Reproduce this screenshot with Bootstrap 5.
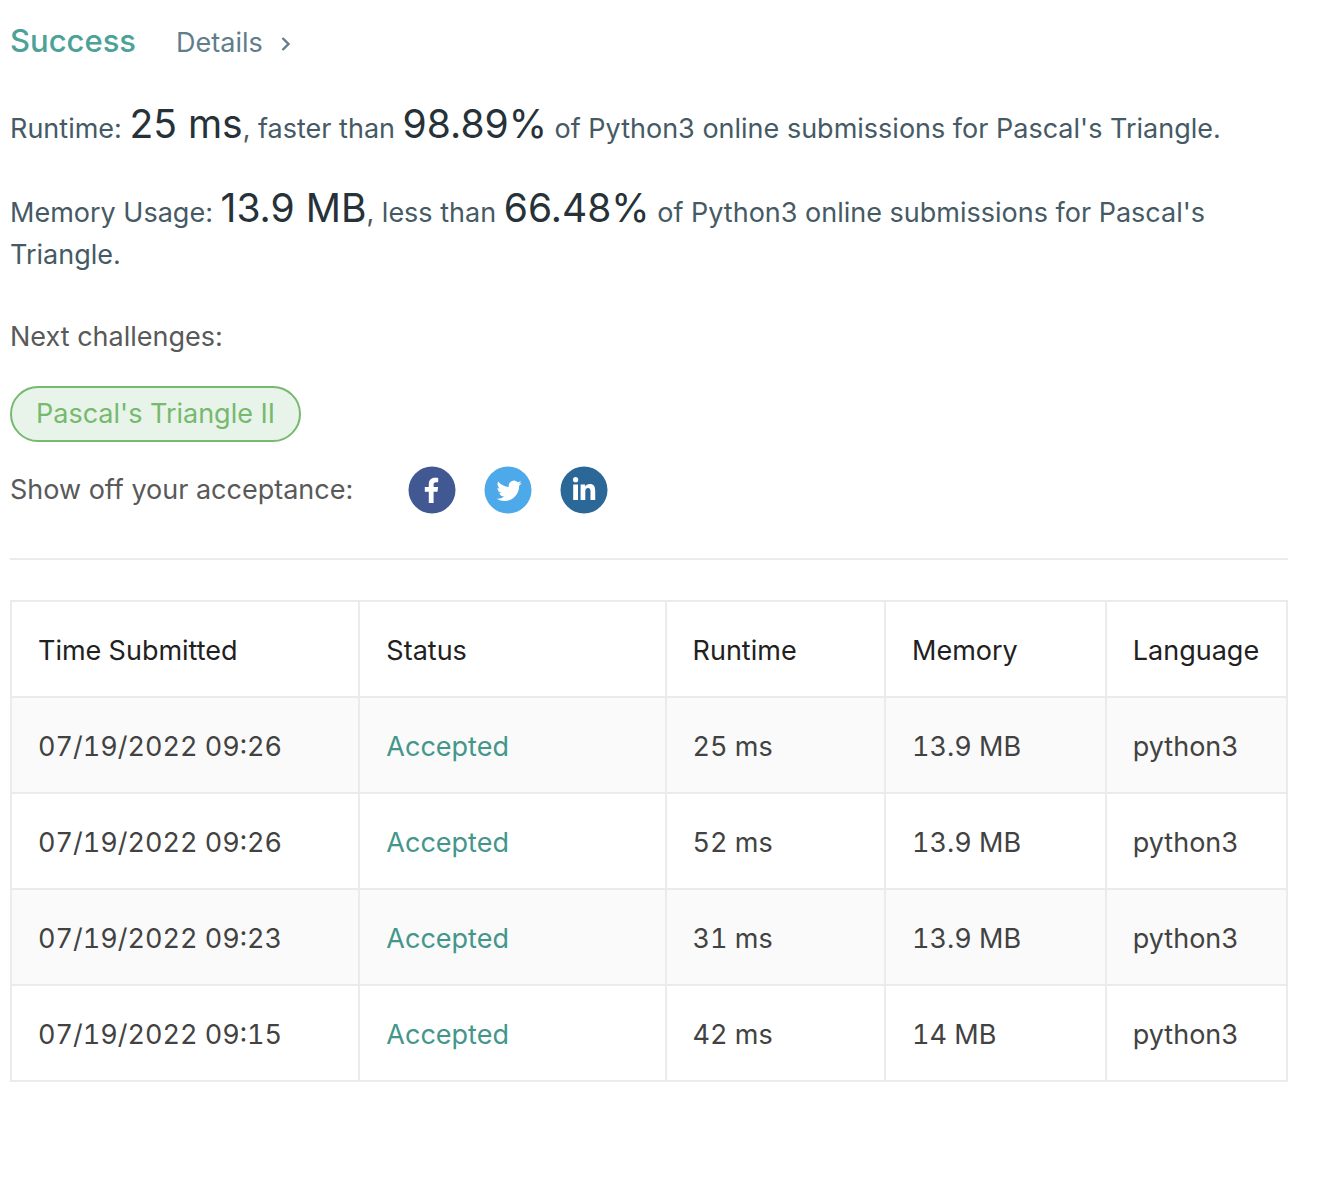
<!DOCTYPE html>
<html lang="en">
<head>
<meta charset="utf-8">
<meta name="viewport" content="width=device-width, initial-scale=1">
<title>Submission result</title>
<link href="https://cdn.jsdelivr.net/npm/bootstrap@5.3.0/dist/css/bootstrap.min.css" rel="stylesheet">
<style>
body{font-family:Inter,"Liberation Sans",sans-serif;font-size:27px;line-height:42px;color:#455a64;background:#fff}
.result{padding:20px 36px 40px 10px}
.result-head{gap:40px;margin-bottom:44px}
.verdict{font-size:31px;font-weight:500;color:#4ca297;line-height:42px}
.details-link{color:#607d8b}
.details-link svg{margin-left:18px}
.stat{margin-bottom:42px}
.stat-last{margin-bottom:40px}
.figure-value{font-size:39px;line-height:30px;color:#263238}
.soft-label{color:#595959}
.next-title{margin-bottom:28px}
.challenge{padding:0 24px;border:2px solid #76b96f;border-radius:28px;background:#e8f4e9;color:#76b96f;line-height:52px}
.share-row{margin-top:24px}
.share-icons{gap:28px;margin-left:55px}
.share-icons svg{display:block}
.divider{margin:44px 0 40px;border-top:2px solid #ebebeb;opacity:1}
.submissions{--bs-table-color:#424242;--bs-table-striped-color:#424242;--bs-table-striped-bg:#fafafa;table-layout:fixed;font-variant-numeric:tabular-nums}
.submissions>:not(caption)>*>*{border:2px solid #ebebeb;padding:29px 26px 25px;line-height:40px;white-space:nowrap}
.submissions>thead>tr>th{font-weight:400;color:#212121}
.submissions a{color:#43978a}
.col-time{width:27.3%}
.col-status{width:24%}
.col-runtime{width:17.2%}
.col-memory{width:17.3%}
</style>
<script defer src="https://cdn.jsdelivr.net/npm/bootstrap@5.3.0/dist/js/bootstrap.bundle.min.js"></script>
</head>
<body>
<main class="result">
  <header class="result-head d-flex align-items-baseline">
    <h1 class="verdict mb-0">Success</h1>
    <a class="details-link text-decoration-none" href="#">Details<svg width="10" height="16" viewBox="0 0 10 16" fill="none" stroke="currentColor" stroke-width="2.4" aria-hidden="true"><path d="M1.5 1 7.5 7 1.5 13"/></svg></a>
  </header>
  <p class="stat">Runtime: <span class="figure-value">25 ms</span>, faster than <span class="figure-value">98.89%</span> of Python3 online submissions for Pascal's Triangle.</p>
  <p class="stat-last">Memory Usage: <span class="figure-value">13.9 MB</span>, less than <span class="figure-value">66.48%</span> of Python3 online submissions for Pascal's Triangle.</p>
  <p class="soft-label next-title">Next challenges:</p>
  <div class="d-flex"><a class="challenge text-decoration-none" href="#">Pascal's Triangle II</a></div>
  <div class="share-row d-flex align-items-center">
    <span class="soft-label">Show off your acceptance:</span>
    <div class="share-icons d-flex">
      <a href="#" aria-label="Share on Facebook"><svg width="48" height="48" viewBox="0 0 48 48"><circle cx="24" cy="24" r="23.5" fill="#425893"/><path fill="#fff" d="M20.8 37V25.8h-4v-4.7h4v-2.8c0-4.3 2.3-6.6 6.2-6.6 1.2 0 2.3.1 3.2.3v4.3h-2.2c-1.8 0-2.4.9-2.4 2.3v2.5h4.5l-.6 4.7h-3.9V37z"/></svg></a>
      <a href="#" aria-label="Share on Twitter"><svg width="48" height="48" viewBox="0 0 48 48"><circle cx="24" cy="24" r="23.5" fill="#4da9e9"/><path transform="translate(12.5 12.2) scale(1.05)" fill="#fff" d="M23.95 4.57a10 10 0 0 1-2.82.77 4.96 4.96 0 0 0 2.16-2.72c-.95.55-2 .96-3.13 1.18a4.92 4.92 0 0 0-8.38 4.48C7.69 8.1 4.07 6.13 1.64 3.16a4.92 4.92 0 0 0 1.52 6.57 4.9 4.9 0 0 1-2.23-.61v.06a4.93 4.93 0 0 0 3.95 4.83 5 5 0 0 1-2.21.08 4.94 4.94 0 0 0 4.6 3.42A9.87 9.87 0 0 1 0 19.54a13.99 13.99 0 0 0 7.55 2.21c9.05 0 14-7.5 14-13.98 0-.21 0-.42-.02-.63a10 10 0 0 0 2.42-2.57z"/></svg></a>
      <a href="#" aria-label="Share on LinkedIn"><svg width="48" height="48" viewBox="0 0 48 48"><circle cx="24" cy="24" r="23.5" fill="#2b6897"/><g fill="#fff"><circle cx="15.6" cy="13.7" r="2.6"/><path d="M13.2 18.4H18V34h-4.8zM20.6 18.4h4.5v2.2c.9-1.5 2.5-2.6 4.7-2.6 4 0 5.4 2.5 5.4 6.8V34h-4.7v-8.5c0-2.2-.7-3.5-2.4-3.5-1.9 0-2.8 1.4-2.8 3.6V34h-4.7z"/></g></svg></a>
    </div>
  </div>
  <hr class="divider">
  <table class="table table-striped submissions mb-0">
    <colgroup><col class="col-time"><col class="col-status"><col class="col-runtime"><col class="col-memory"><col></colgroup>
    <thead><tr><th scope="col">Time Submitted</th><th scope="col">Status</th><th scope="col">Runtime</th><th scope="col">Memory</th><th scope="col">Language</th></tr></thead>
    <tbody>
      <tr><td>07/19/2022 09:26</td><td><a class="text-decoration-none" href="#">Accepted</a></td><td>25 ms</td><td>13.9 MB</td><td>python3</td></tr>
      <tr><td>07/19/2022 09:26</td><td><a class="text-decoration-none" href="#">Accepted</a></td><td>52 ms</td><td>13.9 MB</td><td>python3</td></tr>
      <tr><td>07/19/2022 09:23</td><td><a class="text-decoration-none" href="#">Accepted</a></td><td>31 ms</td><td>13.9 MB</td><td>python3</td></tr>
      <tr><td>07/19/2022 09:15</td><td><a class="text-decoration-none" href="#">Accepted</a></td><td>42 ms</td><td>14 MB</td><td>python3</td></tr>
    </tbody>
  </table>
</main>
</body>
</html>
